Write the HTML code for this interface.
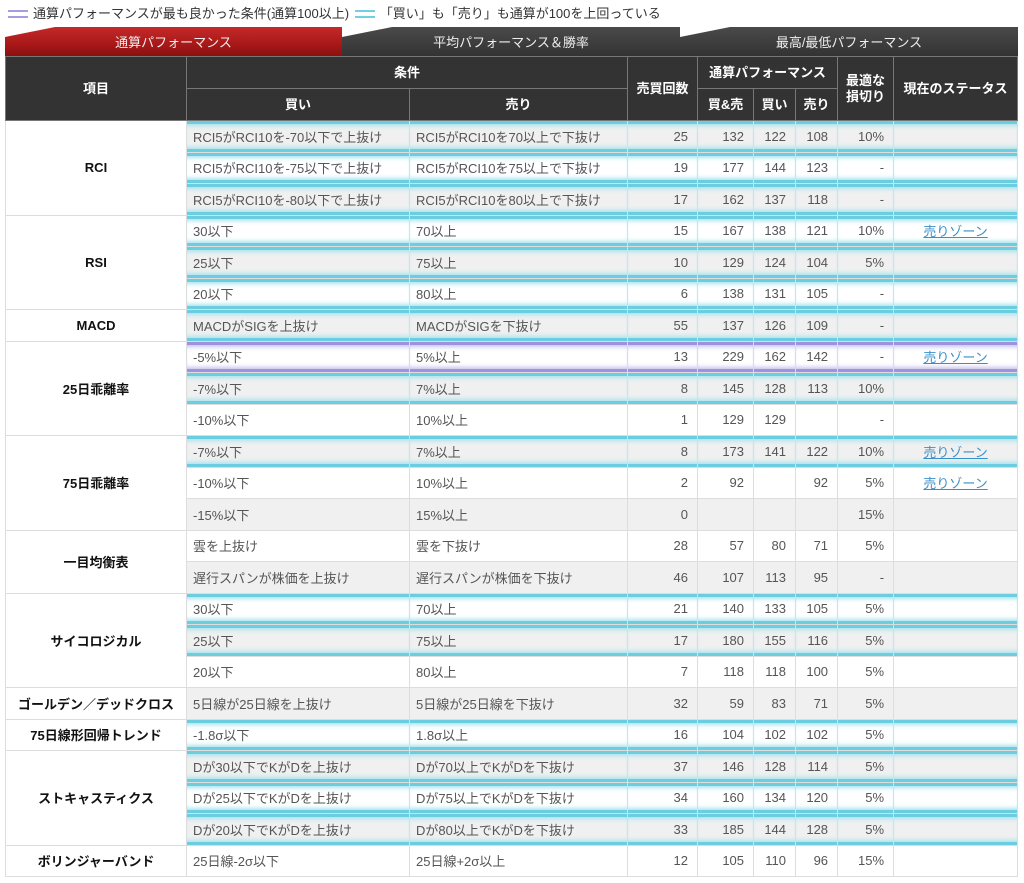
<!DOCTYPE html>
<html><head><meta charset="utf-8"><style>
*{box-sizing:border-box}
body{margin:0;width:1024px;height:883px;background:#fff;font-family:"Liberation Sans","Noto Sans CJK JP",sans-serif;font-size:13px;color:#444;overflow:hidden;position:relative}
.leg{position:absolute;top:4px;left:6px;height:20px;line-height:20px;font-size:13px;color:#333;white-space:nowrap}
.ic{display:inline-block;width:20px;height:8px;border-top:2px solid;border-bottom:2px solid;vertical-align:middle;margin:0 5px 2px 2px}
.tab{position:absolute;top:27px;height:29px;line-height:31px;text-align:center;color:#eee;font-size:13px;clip-path:polygon(0 10px,50px 0,100% 0,100% 100%,0 100%)}
table{position:absolute;left:5px;top:56px;width:1013px;border-collapse:collapse;table-layout:fixed}
th{background:#333;color:#fff;font-weight:bold;border:1px solid #777;height:32px;font-size:13px;line-height:16px}
td{border:1px solid #ddd;height:31.5px;padding:0 6px;white-space:nowrap;color:#555}
td.k{background:#fff;text-align:center;font-weight:bold;color:#111}
tr.g td:not(.k){background:#f0f0f0}
td.n{text-align:right;padding-right:9px}
td.c{text-align:center}
tr.h td:not(.k){box-shadow:inset 0 4px 0 -1px #6ccde0,inset 0 8px 4px -3px #a8e4ee,inset 0 -4px 0 -1px #6ccde0,inset 0 -8px 4px -3px #a8e4ee}
tr.p td:not(.k){box-shadow:inset 0 4px 0 -1px #9c92de,inset 0 8px 4px -3px #c8c2ee,inset 0 -4px 0 -1px #9c92de,inset 0 -8px 4px -3px #c8c2ee}
a{color:#3a8fc8}
</style></head><body>
<div class="leg"><span class="ic" style="border-color:#a99be0"></span>通算パフォーマンスが最も良かった条件(通算100以上) <span class="ic" style="border-color:#70d0e0"></span>「買い」も「売り」も通算が100を上回っている</div>
<div class="tab" style="left:5px;width:337px;background:linear-gradient(#c42a2a,#a81818 60%,#8a1010)">通算パフォーマンス</div>
<div class="tab" style="left:342px;width:338px;background:linear-gradient(#4a4a4a,#333)">平均パフォーマンス＆勝率</div>
<div class="tab" style="left:680px;width:338px;background:linear-gradient(#4a4a4a,#333)">最高/最低パフォーマンス</div>
<table>
<colgroup><col style="width:181px"><col style="width:223px"><col style="width:218px"><col style="width:70px"><col style="width:56px"><col style="width:42px"><col style="width:42px"><col style="width:56px"><col></colgroup>
<tr><th rowspan="2">項目</th><th colspan="2">条件</th><th rowspan="2">売買回数</th><th colspan="3">通算パフォーマンス</th><th rowspan="2">最適な<br>損切り</th><th rowspan="2">現在のステータス</th></tr>
<tr><th>買い</th><th>売り</th><th>買&amp;売</th><th>買い</th><th>売り</th></tr>
<tr class="g h"><td class="k" rowspan="3">RCI</td><td>RCI5がRCI10を-70以下で上抜け</td><td>RCI5がRCI10を70以上で下抜け</td><td class="n">25</td><td class="n">132</td><td class="n">122</td><td class="n">108</td><td class="n">10%</td><td></td></tr>
<tr class="h"><td>RCI5がRCI10を-75以下で上抜け</td><td>RCI5がRCI10を75以上で下抜け</td><td class="n">19</td><td class="n">177</td><td class="n">144</td><td class="n">123</td><td class="n">-</td><td></td></tr>
<tr class="g h"><td>RCI5がRCI10を-80以下で上抜け</td><td>RCI5がRCI10を80以上で下抜け</td><td class="n">17</td><td class="n">162</td><td class="n">137</td><td class="n">118</td><td class="n">-</td><td></td></tr>
<tr class="h"><td class="k" rowspan="3">RSI</td><td>30以下</td><td>70以上</td><td class="n">15</td><td class="n">167</td><td class="n">138</td><td class="n">121</td><td class="n">10%</td><td class="c"><a href="#">売りゾーン</a></td></tr>
<tr class="g h"><td>25以下</td><td>75以上</td><td class="n">10</td><td class="n">129</td><td class="n">124</td><td class="n">104</td><td class="n">5%</td><td></td></tr>
<tr class="h"><td>20以下</td><td>80以上</td><td class="n">6</td><td class="n">138</td><td class="n">131</td><td class="n">105</td><td class="n">-</td><td></td></tr>
<tr class="g h"><td class="k">MACD</td><td>MACDがSIGを上抜け</td><td>MACDがSIGを下抜け</td><td class="n">55</td><td class="n">137</td><td class="n">126</td><td class="n">109</td><td class="n">-</td><td></td></tr>
<tr class="p"><td class="k" rowspan="3">25日乖離率</td><td>-5%以下</td><td>5%以上</td><td class="n">13</td><td class="n">229</td><td class="n">162</td><td class="n">142</td><td class="n">-</td><td class="c"><a href="#">売りゾーン</a></td></tr>
<tr class="g h"><td>-7%以下</td><td>7%以上</td><td class="n">8</td><td class="n">145</td><td class="n">128</td><td class="n">113</td><td class="n">10%</td><td></td></tr>
<tr><td>-10%以下</td><td>10%以上</td><td class="n">1</td><td class="n">129</td><td class="n">129</td><td class="n"></td><td class="n">-</td><td></td></tr>
<tr class="g h"><td class="k" rowspan="3">75日乖離率</td><td>-7%以下</td><td>7%以上</td><td class="n">8</td><td class="n">173</td><td class="n">141</td><td class="n">122</td><td class="n">10%</td><td class="c"><a href="#">売りゾーン</a></td></tr>
<tr><td>-10%以下</td><td>10%以上</td><td class="n">2</td><td class="n">92</td><td class="n"></td><td class="n">92</td><td class="n">5%</td><td class="c"><a href="#">売りゾーン</a></td></tr>
<tr class="g"><td>-15%以下</td><td>15%以上</td><td class="n">0</td><td class="n"></td><td class="n"></td><td class="n"></td><td class="n">15%</td><td></td></tr>
<tr><td class="k" rowspan="2">一目均衡表</td><td>雲を上抜け</td><td>雲を下抜け</td><td class="n">28</td><td class="n">57</td><td class="n">80</td><td class="n">71</td><td class="n">5%</td><td></td></tr>
<tr class="g"><td>遅行スパンが株価を上抜け</td><td>遅行スパンが株価を下抜け</td><td class="n">46</td><td class="n">107</td><td class="n">113</td><td class="n">95</td><td class="n">-</td><td></td></tr>
<tr class="h"><td class="k" rowspan="3">サイコロジカル</td><td>30以下</td><td>70以上</td><td class="n">21</td><td class="n">140</td><td class="n">133</td><td class="n">105</td><td class="n">5%</td><td></td></tr>
<tr class="g h"><td>25以下</td><td>75以上</td><td class="n">17</td><td class="n">180</td><td class="n">155</td><td class="n">116</td><td class="n">5%</td><td></td></tr>
<tr><td>20以下</td><td>80以上</td><td class="n">7</td><td class="n">118</td><td class="n">118</td><td class="n">100</td><td class="n">5%</td><td></td></tr>
<tr class="g"><td class="k">ゴールデン／デッドクロス</td><td>5日線が25日線を上抜け</td><td>5日線が25日線を下抜け</td><td class="n">32</td><td class="n">59</td><td class="n">83</td><td class="n">71</td><td class="n">5%</td><td></td></tr>
<tr class="h"><td class="k">75日線形回帰トレンド</td><td>-1.8σ以下</td><td>1.8σ以上</td><td class="n">16</td><td class="n">104</td><td class="n">102</td><td class="n">102</td><td class="n">5%</td><td></td></tr>
<tr class="g h"><td class="k" rowspan="3">ストキャスティクス</td><td>Dが30以下でKがDを上抜け</td><td>Dが70以上でKがDを下抜け</td><td class="n">37</td><td class="n">146</td><td class="n">128</td><td class="n">114</td><td class="n">5%</td><td></td></tr>
<tr class="h"><td>Dが25以下でKがDを上抜け</td><td>Dが75以上でKがDを下抜け</td><td class="n">34</td><td class="n">160</td><td class="n">134</td><td class="n">120</td><td class="n">5%</td><td></td></tr>
<tr class="g h"><td>Dが20以下でKがDを上抜け</td><td>Dが80以上でKがDを下抜け</td><td class="n">33</td><td class="n">185</td><td class="n">144</td><td class="n">128</td><td class="n">5%</td><td></td></tr>
<tr><td class="k">ボリンジャーバンド</td><td>25日線-2σ以下</td><td>25日線+2σ以上</td><td class="n">12</td><td class="n">105</td><td class="n">110</td><td class="n">96</td><td class="n">15%</td><td></td></tr>
</table>
</body></html>
